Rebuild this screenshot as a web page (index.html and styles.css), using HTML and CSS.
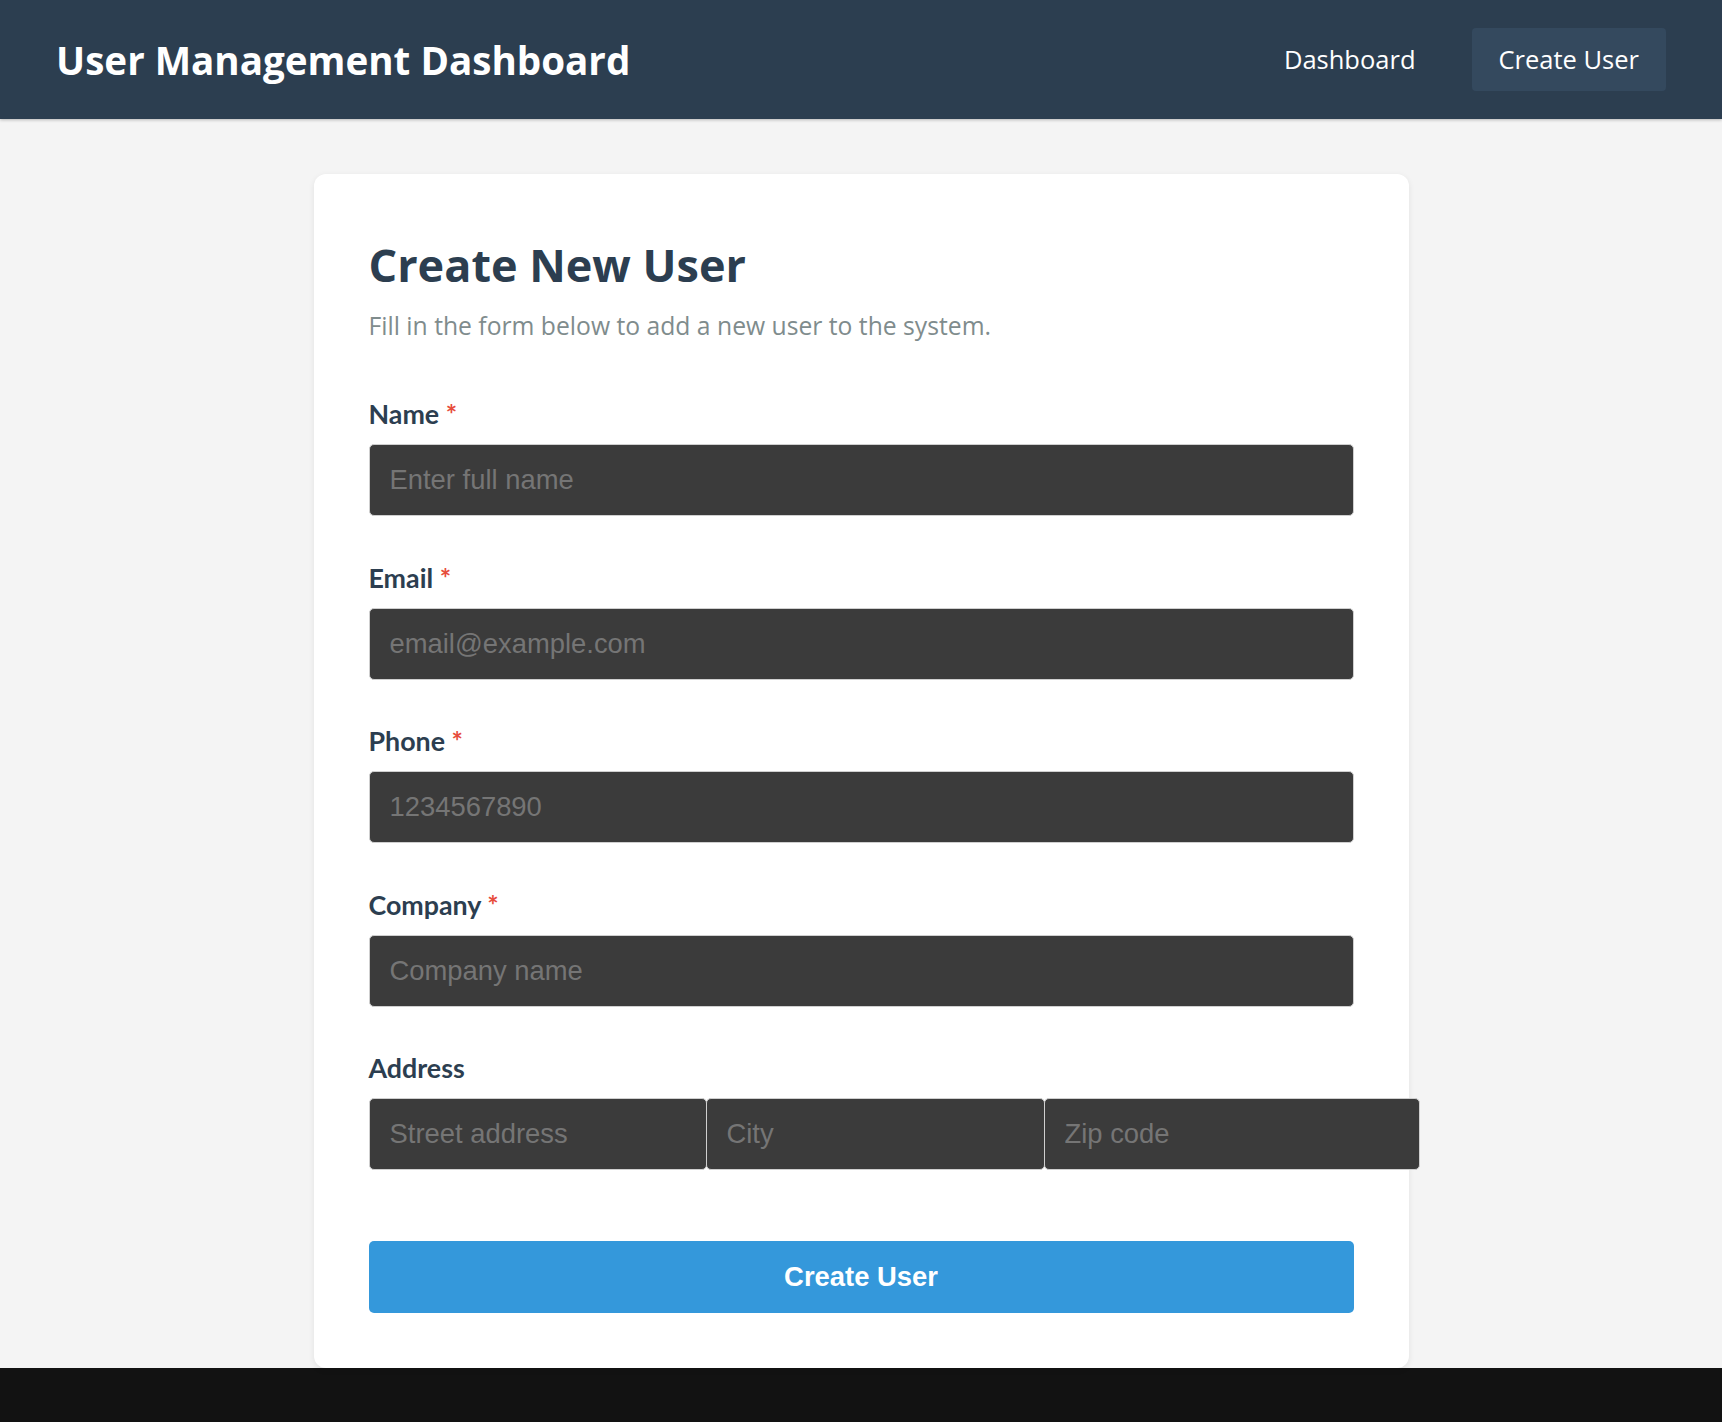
FILE: index.html
```html
<!DOCTYPE html>
<html lang="en">
<head>
<meta charset="utf-8">
<title>User Management Dashboard</title>
<link rel="stylesheet" href="styles.css">
</head>
<body>
<header class="topbar">
  <h1 class="brand">User Management Dashboard</h1>
  <nav class="nav">
    <a class="nav-link" href="#">Dashboard</a>
    <a class="nav-link nav-link-active" href="#">Create User</a>
  </nav>
</header>
<main class="main">
  <section class="card">
    <h2 class="card-title">Create New User</h2>
    <p class="card-sub">Fill in the form below to add a new user to the system.</p>
    <form class="form">
      <div class="group">
        <label class="label">Name <span class="req">*</span></label>
        <input class="input" type="text" placeholder="Enter full name">
      </div>
      <div class="group">
        <label class="label">Email <span class="req">*</span></label>
        <input class="input" type="email" placeholder="email@example.com">
      </div>
      <div class="group">
        <label class="label">Phone <span class="req">*</span></label>
        <input class="input" type="text" placeholder="1234567890">
      </div>
      <div class="group">
        <label class="label">Company <span class="req">*</span></label>
        <input class="input" type="text" placeholder="Company name">
      </div>
      <div class="group">
        <label class="label">Address</label>
        <div class="address">
          <input class="input input-street" type="text" placeholder="Street address">
          <input class="input input-city" type="text" placeholder="City">
          <input class="input input-zip" type="text" placeholder="Zip code">
        </div>
      </div>
      <button class="submit" type="button">Create User</button>
    </form>
  </section>
</main>
<footer class="footer"></footer>
</body>
</html>
```
FILE: styles.css
```css
* { box-sizing: border-box; }
html, body { margin: 0; padding: 0; }
body {
  background: #f4f4f4;
  font-family: "Open Sans", "Noto Sans", sans-serif;
  color: #2c3e50;
}
.topbar {
  height: 119px;
  background: #2c3e50;
  display: flex;
  align-items: center;
  justify-content: space-between;
  padding: 0 56px;
  box-shadow: 0 1px 3px rgba(0,0,0,0.25);
}
.brand {
  margin: 0;
  color: #ffffff;
  font-size: 38.6px;
  font-weight: 700;
}
.nav {
  display: flex;
  align-items: center;
  gap: 29px;
}
.nav-link {
  color: #ffffff;
  text-decoration: none;
  font-size: 25.5px;
  padding: 13px 27px;
  border-radius: 4px;
  line-height: 37px;
}
.nav-link-active { background: #34495e; }
.main {
  padding-top: 55px;
  display: flex;
  justify-content: center;
}
.card {
  width: 1095px;
  background: #ffffff;
  border-radius: 12px;
  box-shadow: 0 2px 6px rgba(0,0,0,0.08);
  padding: 55px;
}
.card-title {
  margin: 10px 0 18px;
  font-size: 45px;
  line-height: 52px;
  font-weight: 700;
  color: #2c3e50;
}
.card-sub {
  margin: 0 0 56px;
  font-size: 24.7px;
  line-height: 34px;
  color: #7f8c8d;
}
.group { margin-bottom: 46.5px; }
.label {
  display: block;
  font-family: "Lato", sans-serif;
  font-weight: 700;
  font-size: 26.8px;
  line-height: 30px;
  margin-bottom: 15px;
  color: #2c3e50;
}
.req { color: #e74c3c; }
.input {
  display: block;
  width: 100%;
  height: 72px;
  background: #3b3b3b;
  border: 1px solid #cfcfcf;
  border-radius: 5px;
  padding: 0 20px;
  font-family: "Liberation Sans", Arial, sans-serif;
  font-size: 27.4px;
  color: #eeeeee;
  outline: none;
}
.input::placeholder { color: #757575; }
.address {
  display: flex;
  width: 1051px;
}
.input-street { width: 338px; flex: none; }
.input-city { width: 339px; flex: none; margin-left: -1px; }
.input-zip { width: 376px; flex: none; margin-left: -1px; }
.submit {
  display: block;
  width: 100%;
  height: 72px;
  margin-top: 71px;
  background: #3498db;
  color: #ffffff;
  border: none;
  border-radius: 5px;
  font-family: "Liberation Sans", Arial, sans-serif;
  font-weight: 700;
  font-size: 27.4px;
}
.footer {
  height: 80px;
  background: #121212;
}
```
